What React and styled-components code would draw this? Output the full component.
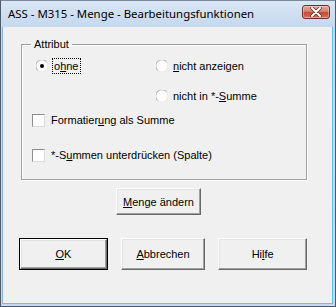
import styled, { createGlobalStyle } from "styled-components";

const GlobalStyle = createGlobalStyle`
  html, body {
    margin: 0;
    padding: 0;
    background: #fff;
  }
  body {
    font-family: "Liberation Sans", Arial, sans-serif;
    font-size: 11px;
    color: #000;
  }
`;

const Radio = ({checked}) => (
    <svg width="12" height="12" viewBox="0 0 12 12">
        <circle cx="6" cy="6" r="5.5" fill="#fff"/>
        <path d="M1.5 10.5 A5.5 5.5 0 0 1 10.5 1.5" fill="none" stroke="#a0a0a0"/>
        <path d="M10.5 1.5 A5.5 5.5 0 0 1 1.5 10.5" fill="none" stroke="#e3e3e3"/>
        {checked && <circle cx="6" cy="6" r="2" fill="#000"/>}
    </svg>
);

const CloseIcon = () => (
    <svg width="12" height="10" viewBox="0 0 12 10">
        <path d="M2 1 L10 9 M10 1 L2 9" stroke="#5a2a2a" strokeWidth="3.4" strokeLinecap="round"/>
        <path d="M2 1 L10 9 M10 1 L2 9" stroke="#fff" strokeWidth="2" strokeLinecap="round"/>
    </svg>
);

const App = () => {
    return (
        <>
            <GlobalStyle/>
            <StyledWindow>
                <StyledTitleBar>
                    <StyledTitle>ASS - M315 - Menge - Bearbeitungsfunktionen</StyledTitle>
                    <StyledClose><CloseIcon/></StyledClose>
                </StyledTitleBar>
                <StyledClient>
                    <StyledGroup>
                        <legend>Attribut</legend>
                        <StyledRow top={7}>
                            <StyledOption indent={14} width={120}>
                                <Radio checked/>
                                <StyledFocus>o<u>h</u>ne</StyledFocus>
                            </StyledOption>
                            <StyledOption>
                                <Radio/>
                                <span><u>n</u>icht anzeigen</span>
                            </StyledOption>
                        </StyledRow>
                        <StyledRow top={14}>
                            <StyledOption indent={134}>
                                <Radio/>
                                <span>nicht in *-<u>S</u>umme</span>
                            </StyledOption>
                        </StyledRow>
                        <StyledRow top={8}>
                            <StyledOption indent={10}>
                                <StyledCheck/>
                                <span>Formatier<u>u</u>ng als Summe</span>
                            </StyledOption>
                        </StyledRow>
                        <StyledRow top={19}>
                            <StyledOption indent={10}>
                                <StyledCheck/>
                                <span>*-S<u>u</u>mmen unterdrücken (Spalte)</span>
                            </StyledOption>
                        </StyledRow>
                    </StyledGroup>
                    <StyledMiddle>
                        <StyledButton width={85} height={27}><u>M</u>enge ändern</StyledButton>
                    </StyledMiddle>
                    <StyledButtons>
                        <StyledButton width={87} height={30} primary><u>O</u>K</StyledButton>
                        <StyledButton width={85} height={32}><u>A</u>bbrechen</StyledButton>
                        <StyledButton width={89} height={32}>Hi<u>l</u>fe</StyledButton>
                    </StyledButtons>
                </StyledClient>
            </StyledWindow>
        </>
    );
};

export default App;

const StyledWindow = styled.div`
  width: 336px;
  height: 307px;
  box-sizing: border-box;
  display: flex;
  flex-direction: column;
  background: linear-gradient(#d9e6f5, #c3d6ed 30px, #c6d8ee);
  border: 1px solid #4d5a6a;
  border-top-color: #7a8899;
  padding: 0 2px 2px 1px;
`;

const StyledTitleBar = styled.div`
  height: 26px;
  display: flex;
  align-items: flex-start;
  justify-content: space-between;
  padding-left: 6px;
  flex-shrink: 0;
`;

const StyledTitle = styled.span`
  font-family: "Noto Sans", "Open Sans", sans-serif;
  font-size: 11.4px;
  line-height: 16px;
  margin-top: 5px;
  color: #000;
`;

const StyledClose = styled.div`
  width: 28px;
  height: 14px;
  margin: 4px 3px 0 0;
  box-sizing: border-box;
  border: 1px solid #6b2d2d;
  border-radius: 3px;
  background: linear-gradient(#e9aa9d, #d4806d 45%, #c04b34 55%, #d27560);
  box-shadow: inset 0 0 0 1px rgba(255, 255, 255, 0.35);
  display: flex;
  align-items: center;
  justify-content: center;
`;

const StyledClient = styled.div`
  flex: 1;
  background: #f0f0f0;
  border-right: 1px solid #5bc8ef;
  border-bottom: 1px solid #5bc8ef;
  border-left: 1px solid #8fb4dc;
  padding: 10px 25px 0 18px;
  display: flex;
  flex-direction: column;
`;

const StyledGroup = styled.fieldset`
  margin: 0;
  padding: 0 0 14px 0;
  height: 143px;
  box-sizing: border-box;
  border: 1px solid #a0a0a0;
  box-shadow: inset 1px 1px 0 #fff, 1px 1px 0 #fff;

  legend {
    margin-left: 9px;
    padding: 0 3px;
    line-height: 14px;
    color: #000;
  }
`;

const StyledRow = styled.div`
  display: flex;
  align-items: center;
  height: 16px;
  margin-top: ${({top}) => top}px;
`;

const StyledOption = styled.div`
  display: flex;
  align-items: center;
  gap: 5px;
  margin-left: ${({indent}) => indent || 0}px;
  width: ${({width}) => width ? `${width}px` : "auto"};
  white-space: nowrap;

  svg {
    flex-shrink: 0;
  }
`;

const StyledFocus = styled.span`
  outline: 1px dotted #000;
  outline-offset: 0;
  padding: 1px 1px;
`;

const StyledCheck = styled.span`
  width: 13px;
  height: 13px;
  box-sizing: border-box;
  background: #fff;
  border: 1px solid;
  border-color: #8e8f8f #dcdcdc #dcdcdc #8e8f8f;
  margin-right: 1px;
`;

const StyledMiddle = styled.div`
  display: flex;
  padding-left: 95px;
  margin-top: 8px;
`;

const StyledButtons = styled.div`
  display: flex;
  align-items: flex-start;
  gap: 13px;
  margin-top: 23px;
  margin-left: -2px;
`;

const StyledButton = styled.button`
  width: ${({width}) => width}px;
  height: ${({height}) => height}px;
  box-sizing: border-box;
  padding: 0;
  font-family: "Liberation Sans", Arial, sans-serif;
  font-size: 11px;
  color: #000;
  background: #f0f0f0;
  border: 1px solid;
  border-color: #fff #696969 #696969 #fff;
  box-shadow: inset -1px -1px 0 #a0a0a0, inset 1px 1px 0 #e3e3e3
    ${({primary}) => primary ? ", 0 0 0 1px #000" : ""};
  ${({primary}) => primary && "margin: 1px;"}
`;
